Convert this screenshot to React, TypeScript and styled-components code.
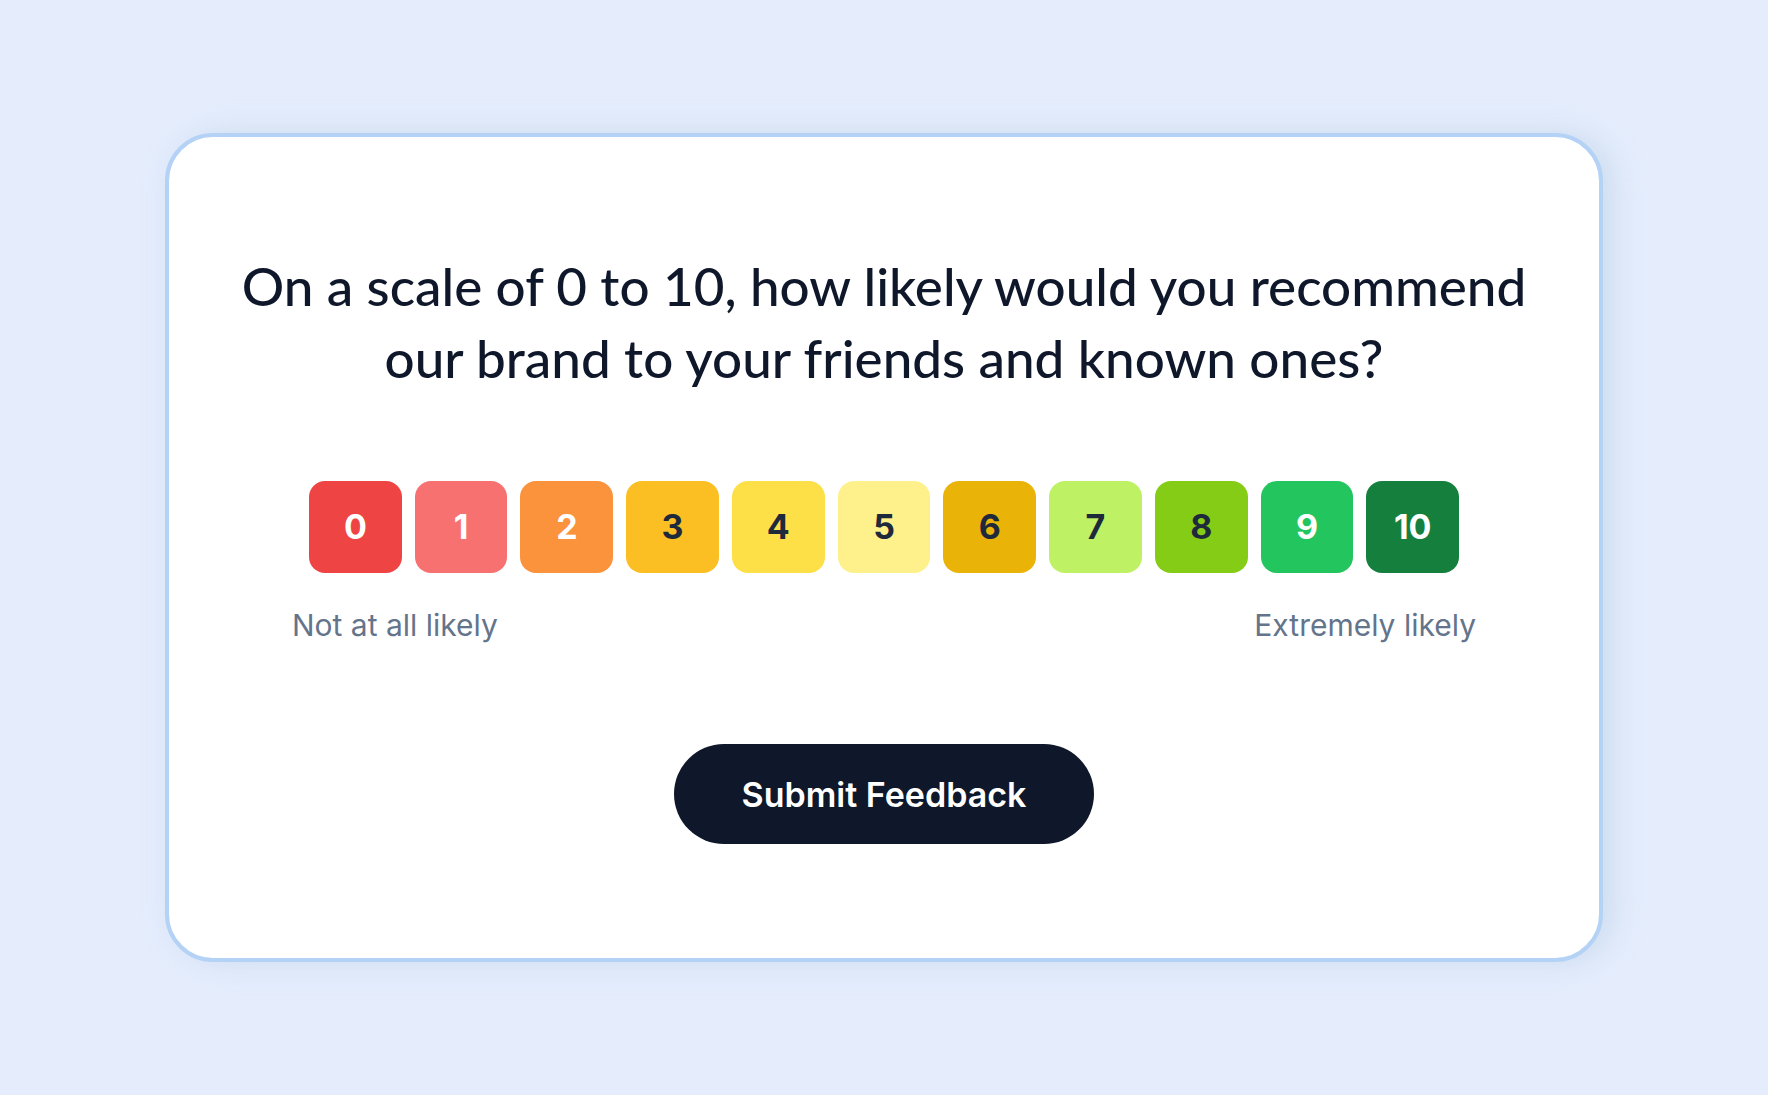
import React, { useState } from 'react';
import styled, { createGlobalStyle } from 'styled-components';

const GlobalStyle = createGlobalStyle`
  *, *::before, *::after { box-sizing: border-box; }
  body {
    margin: 0;
    background: #ffffff;
    font-family: Inter, "Liberation Sans", sans-serif;
    color: #0f172a;
  }
`;

const Page = styled.main`
  min-height: calc(100vh - 1px);
  padding: 80px;
  display: flex;
  align-items: center;
  justify-content: center;
  background: #e5edfd;
`;

const Card = styled.form`
  width: 100%;
  max-width: 1438px;
  padding: 113px 24px 114px;
  display: flex;
  flex-direction: column;
  align-items: center;
  background: #ffffff;
  border: 4px solid #b4d2f6;
  border-radius: 48px;
  box-shadow: 10px 0 32px rgba(147, 181, 206, 0.3);
`;

const Question = styled.h1`
  margin: 0;
  max-width: 1340px;
  font-family: Lato, "Open Sans", sans-serif;
  font-size: 53px;
  font-weight: 500;
  line-height: 72px;
  text-align: center;
`;

const Scale = styled.fieldset`
  width: 100%;
  max-width: 1150px;
  min-width: 0;
  margin: 87px 0 0;
  padding: 0;
  border: 0;
  display: grid;
  grid-template-columns: repeat(11, 1fr);
  gap: 13px;
`;

const Score = styled.label<{ $fill: string; $ink: string }>`
  display: flex;
  align-items: center;
  justify-content: center;
  aspect-ratio: 1;
  border-radius: 16px;
  background: ${(p) => p.$fill};
  color: ${(p) => p.$ink};
  font-size: 34px;
  font-weight: 700;
  cursor: pointer;

  &:has(input:checked),
  &:focus-within {
    box-shadow: 0 0 0 4px #b4d2f6;
  }
`;

const ScoreInput = styled.input`
  appearance: none;
  width: 0;
  height: 0;
  margin: 0;
  outline: none;
`;

const Legend = styled.div`
  width: 100%;
  max-width: 1184px;
  margin-top: 32px;
  display: flex;
  justify-content: space-between;
  color: #64748b;
  font-size: 30px;
  font-weight: 400;
  line-height: 40px;
`;

const Submit = styled.button`
  height: 100px;
  margin-top: 99px;
  padding: 0 68px;
  border: 0;
  border-radius: 50px;
  background: #0f172a;
  color: #ffffff;
  font-family: inherit;
  font-size: 34px;
  font-weight: 600;
  cursor: pointer;
`;

const LIGHT = '#ffffff';
const DARK = '#1e293b';

const scores = [
  { fill: '#ef4444', ink: LIGHT },
  { fill: '#f87171', ink: LIGHT },
  { fill: '#fb923c', ink: LIGHT },
  { fill: '#fbbf24', ink: DARK },
  { fill: '#fde047', ink: DARK },
  { fill: '#fef08a', ink: DARK },
  { fill: '#eab308', ink: DARK },
  { fill: '#bef264', ink: DARK },
  { fill: '#84cc16', ink: DARK },
  { fill: '#22c55e', ink: LIGHT },
  { fill: '#15803d', ink: LIGHT },
];

export default function App() {
  const [picked, setPicked] = useState<number | null>(null);

  return (
    <>
      <GlobalStyle />
      <Page>
        <Card onSubmit={(e: React.FormEvent) => e.preventDefault()}>
          <Question id="question">
            On a scale of 0 to 10, how likely would you recommend our brand to your friends and known ones?
          </Question>
          <Scale aria-labelledby="question">
            {scores.map(({ fill, ink }, value) => (
              <Score key={value} $fill={fill} $ink={ink} htmlFor={`score-${value}`}>
                <ScoreInput
                  type="radio"
                  name="score"
                  id={`score-${value}`}
                  value={value}
                  checked={picked === value}
                  onChange={() => setPicked(value)}
                />
                {value}
              </Score>
            ))}
          </Scale>
          <Legend>
            <span>Not at all likely</span>
            <span>Extremely likely</span>
          </Legend>
          <Submit type="submit">Submit Feedback</Submit>
        </Card>
      </Page>
    </>
  );
}
